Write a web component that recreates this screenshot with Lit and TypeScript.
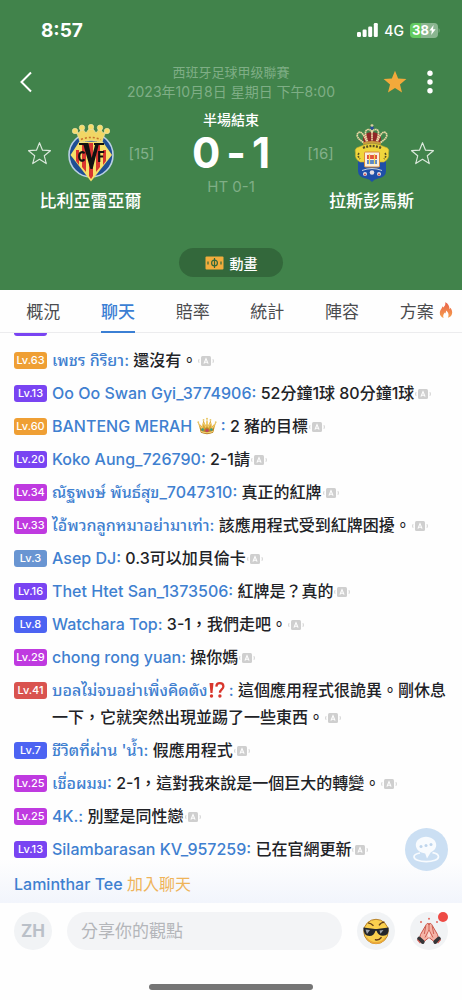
import { LitElement, html, css, svg, nothing } from "lit";
import { customElement, property, state } from "lit/decorators.js";
import { classMap } from "lit/directives/class-map.js";

interface Message {
  level: number;
  tone: string;
  name: string;
  emoji?: "crown" | "interrobang";
  text: string;
}

const MESSAGES: Message[] = [
  { level: 63, tone: "orange", name: "เพชร กิริยา", text: "還沒有。" },
  { level: 13, tone: "purple", name: "Oo Oo Swan Gyi_3774906", text: "52分鐘1球 80分鐘1球" },
  { level: 60, tone: "orange", name: "BANTENG MERAH", emoji: "crown", text: "2 豬的目標" },
  { level: 20, tone: "purple", name: "Koko Aung_726790", text: "2-1請" },
  { level: 34, tone: "magenta", name: "ณัฐพงษ์ พันธ์สุข_7047310", text: "真正的紅牌" },
  { level: 33, tone: "magenta", name: "ไอ้พวกลูกหมาอย่ามาเท่า", text: "該應用程式受到紅牌困擾。" },
  { level: 3, tone: "sky", name: "Asep DJ", text: "0.3可以加貝倫卡" },
  { level: 16, tone: "purple", name: "Thet Htet San_1373506", text: "紅牌是？真的" },
  { level: 8, tone: "blue", name: "Watchara Top", text: "3-1，我們走吧。" },
  { level: 29, tone: "magenta", name: "chong rong yuan", text: "操你媽" },
  { level: 41, tone: "red", name: "บอลไม่จบอย่าเพิ่งคิดตัง", emoji: "interrobang", text: "這個應用程式很詭異。剛休息一下，它就突然出現並踢了一些東西。" },
  { level: 7, tone: "blue", name: "ชีวิตที่ผ่าน 'น้ำ", text: "假應用程式" },
  { level: 25, tone: "magenta", name: "เชื่อผมม", text: "2-1，這對我來說是一個巨大的轉變。" },
  { level: 25, tone: "magenta", name: "4K.", text: "別墅是同性戀" },
  { level: 13, tone: "purple", name: "Silambarasan KV_957259", text: "已在官網更新" },
];

const starPath = "M12 1.6l2.9 7.2 7.6.5-5.9 4.9 1.9 7.5-6.5-4.1-6.5 4.1 1.9-7.5-5.9-4.9 7.6-.5z";

const translateIcon = svg`
  <rect x="4" y="1" width="10" height="10" rx="1.5" fill="#cfcfcf"/>
  <path d="M6.9 8.6 9 3.6l2.1 5M7.6 7.2h2.8" fill="none" stroke="#fff" stroke-width="1.1"/>
  <path d="M2 4.2Q1.2 6 2 7.8M16 4.2q.8 1.8 0 3.6" fill="none" stroke="#d2d2d2" stroke-width="1"/>`;

const crownIcon = svg`
  <path d="M1 5.5 4.4 17h13.2L21 5.5l-4.4 4.2L14.8 3 12.6 9 11 1.8 9.4 9 7.2 3 5.4 9.7z" fill="#d9a437"/>
  <path d="M4.4 17 3 11.5l4 2.6 4-3.4 4 3.4 4-2.6L17.6 17Q11 20 4.4 17z" fill="#b9822a"/>
  <path d="M2 7l3.2 5 2-6 2.4 5L11 4l1.4 7 2.4-5 2 6L20 7" fill="none" stroke="#f4d477" stroke-width="1"/>
  <path d="M4.2 15.4Q11 18.6 17.8 15.4" fill="none" stroke="#f0cf70" stroke-width="1.2"/>
  <circle cx="1.4" cy="5.4" r="1" fill="#e8c765"/><circle cx="20.6" cy="5.4" r="1" fill="#e8c765"/>
  <circle cx="7.2" cy="2.8" r="1" fill="#e8c765"/><circle cx="14.8" cy="2.8" r="1" fill="#e8c765"/>
  <circle cx="11" cy="1.6" r="1.1" fill="#e8c765"/>
  <circle cx="11" cy="14.4" r="1.7" fill="#c23f62"/>
  <circle cx="6.2" cy="13.4" r="1.3" fill="#2d9f8c"/><circle cx="15.8" cy="13.4" r="1.3" fill="#2d9f8c"/>`;

const interrobangIcon = svg`
  <path d="M1.6 1.6h4.2L4.8 12.2H2.6z" fill="#d8362c"/><circle cx="3.7" cy="15.4" r="1.8" fill="#d8362c"/>
  <path d="M8.8 5.4C9 2.8 10.6 1.8 12.5 1.8c2.2 0 3.8 1.3 3.8 3.5 0 3-3.6 3.2-3.6 6.5" fill="none" stroke="#d8362c" stroke-width="2.4"/>
  <circle cx="12.6" cy="15.4" r="1.8" fill="#d8362c"/>`;

@customElement("chat-row")
class ChatRow extends LitElement {
  @property({ attribute: false }) message!: Message;

  static styles = css`
    :host { display: flex; gap: 5px; align-items: flex-start; }
    .level {
      flex: none; width: 33px; height: 17px; margin-top: 5px; border-radius: 3px;
      font-size: 11px; line-height: 17px; font-weight: 500; color: #fff; text-align: center;
    }
    .orange { background: #ef9f34; }
    .purple { background: #7944f2; }
    .magenta { background: #bf3ae0; }
    .sky { background: #6995d2; }
    .blue { background: #4c63f2; }
    .red { background: #d9534f; }
    .line { margin: 0; min-width: 0; }
    .name { color: #3f80d0; }
    .crown, .bang { height: 18px; vertical-align: -3px; }
    .crown { width: 20px; }
    .bang { width: 17px; }
    .translate { width: 18px; height: 12px; vertical-align: -1px; }
  `;

  private emoji(kind: Message["emoji"]) {
    if (kind === "crown") return html` <svg class="crown" viewBox="0 0 22 19" role="img" aria-label="👑">${crownIcon}</svg> `;
    if (kind === "interrobang") return html`<svg class="bang" viewBox="0 0 18 18" role="img" aria-label="⁉️">${interrobangIcon}</svg> `;
    return nothing;
  }

  render() {
    const m = this.message;
    return html`
      <span class="level ${m.tone}">Lv.${m.level}</span>
      <p class="line"><span class="name">${m.name}${this.emoji(m.emoji)}:</span> ${m.text}<svg class="translate" viewBox="0 0 18 12" aria-hidden="true">${translateIcon}</svg></p>
    `;
  }
}

@customElement("team-card")
class TeamCard extends LitElement {
  @property() name = "";
  @property() rank = "";
  @property({ type: Boolean }) away = false;

  static styles = css`
    :host { display: block; }
    .team {
      display: grid; grid-template-columns: repeat(3, 51px); grid-template-rows: 58px 24px;
      row-gap: 7px; align-items: center; justify-items: center; padding-top: 14px;
    }
    .rank { font-size: 15px; color: #83b08a; }
    .favourite { display: flex; padding: 0; border: 0; background: none; }
    .star { width: 25px; height: 25px; }
    .away .favourite { order: 3; }
    .away .crest { order: 2; }
    .away .rank { order: 1; }
    .crest { height: 58px; }
    .name { order: 4; grid-column: 1 / -1; font-size: 17px; line-height: 24px; font-weight: 500; color: #fff; }
  `;

  private villarreal() {
    return svg`
      <circle cx="23" cy="31" r="22" fill="#1f4f94" stroke="#b9cfe4" stroke-width="1.6"/>
      <path d="M11 18h24l9 13-21 26.5L2.5 31z" fill="#f7e06a"/>
      <path d="M14 19h4v29l-4-5zM21 19h4v33l-2 3-2-3zM28 19h4v24l-4 5zM8 26h3v15l-3-4zM35 26h3v11l-3 4z" fill="#d8362f"/>
      <path d="M12 18.6Q10 9 6 6.5L11 9l3-5 4 5 5-7 5 7 4-5 3 5 5-2.5Q36 9 34 18.6 23 15 12 18.6z" fill="#f1d765" stroke="#e9e0a0" stroke-width=".8"/>
      <path d="M13 15.5q10-4 20 0" fill="none" stroke="#c8702d" stroke-width="1.5" stroke-dasharray="2 2"/>
      <g fill="#f6dc6a" stroke="#e8dfa6" stroke-width=".7"><circle cx="7" cy="7" r="2.7"/><circle cx="14" cy="3.7" r="2.7"/><circle cx="23" cy="3" r="2.7"/><circle cx="32" cy="3.7" r="2.7"/><circle cx="39" cy="7" r="2.7"/></g>
      <path d="M11 20h9.500M26 20h10" stroke="#111" stroke-width="1.8"/>
      <path d="M15 19.500h5.500L23.600 34l3.900-14.500h3.500L24.600 45h-2.200z" fill="#111"/>
      <path d="M16.200 29.500c-.8-2.400-5-1.800-5 3s4.200 5.200 5 2.700" fill="none" stroke="#111" stroke-width="2.200"/>
      <path d="M31.200 38V28h5M31.200 32.500h4" fill="none" stroke="#111" stroke-width="2.200"/>`;
  }

  private lasPalmas() {
    return svg`
      <path d="M9 35h28v12q0 6-8 7.5-4 .8-6 3.5-2-2.7-6-3.5Q9 53 9 47z" fill="#1f4fa8"/>
      <path d="M10 23q13-7 26 0 5 1 3.5 6 1 6-4.5 9H11q-5.500-3-4.500-9Q5 24 10 23z" fill="#f0d63c" stroke="#c9ad2e" stroke-width=".6"/>
      <path d="M14 24q9-4 18 0" stroke="#574f24" stroke-width="2.400" fill="none" stroke-dasharray="2 1.300"/>
      <path d="M10 29q-2 3 1 6M36 29q2 3-1 6" stroke="#574f24" stroke-width="1.600" fill="none" stroke-dasharray="2 1"/>
      <rect x="15.500" y="28" width="15" height="15" rx="1" fill="#f9eee0" stroke="#d98a3a"/>
      <path d="M18 31h10v4H18z" fill="#e2533d"/><path d="M18 36h10v4H18z" fill="#6089c8"/>
      <path d="M20.500 30v10M25.500 30v10" stroke="#f6d657" stroke-width="1.200"/>
      <g fill="#e7dfe3"><circle cx="16" cy="50" r="2"/><circle cx="23" cy="48.500" r="2.300"/><circle cx="30" cy="50" r="2"/></g>
      <circle cx="16" cy="50.500" r="1" fill="#d14a4a"/><circle cx="30" cy="50.500" r="1" fill="#d14a4a"/>
      <path d="M13 46.500q10-4 20 0" fill="none" stroke="#c8d0dc" stroke-width="1"/>
      <path d="M15 19q-2-5 0-8 4-3 8-3t8 3q2 3 0 8-8-2.500-16 0z" fill="#8f2727"/>
      <path d="M14.500 18.500Q6 13 9 9q4-3.500 8.500 8.500M18.500 17.500Q14 5.500 19.500 5.500q2.500 0 3.500 3 1-3 3.500-3 5.500 0 1 12M31.500 18.500Q40 13 37 9q-4-3.500-8.500 8.500M23 6v11" fill="none" stroke="#ead7a4" stroke-width="1.700" stroke-dasharray="1.700 .4"/>
      <path d="M14 18.500q9-3 18 0v2.300q-9-2.500-18 0z" fill="#c99b3c"/>
      <circle cx="23" cy="4" r="1.800" fill="#2a4d9c"/><path d="M23 0v3M21.500 1.300h3" stroke="#ead7a4" stroke-width="1"/>`;
  }

  render() {
    return html`
      <div class=${classMap({ team: true, away: this.away })}>
        <button class="favourite" aria-label="收藏 ${this.name}">
          <svg class="star" viewBox="0 0 24 24"><path d=${starPath} fill="none" stroke="#dbe8dc" stroke-width="1.1" stroke-linejoin="round"/></svg>
        </button>
        <svg class="crest" viewBox="0 0 46 58" aria-hidden="true">${this.away ? this.lasPalmas() : this.villarreal()}</svg>
        <span class="rank">[${this.rank}]</span>
        <span class="name">${this.name}</span>
      </div>
    `;
  }
}

@customElement("app-root")
class AppRoot extends LitElement {
  @state() private tab = "聊天";

  static styles = css`
    :host {
      display: flex; flex-direction: column; height: 100vh; background: #fefefe; color: #212226;
      font-family: Inter, "Noto Sans Thai Looped", "Noto Sans Thai", "Noto Sans CJK TC", sans-serif;
    }
    button { font: inherit; color: inherit; cursor: pointer; }
    .match { background: #41834b; color: #fff; padding-bottom: 13px; }
    .status { display: flex; justify-content: space-between; align-items: center; height: 60px; padding: 0 22px 0 41px; }
    .clock { font-size: 19px; font-weight: 700; }
    .signals { display: flex; align-items: center; gap: 6px; font-size: 14px; font-weight: 500; }
    .bars { width: 21px; height: 14px; }
    .battery { display: flex; align-items: center; }
    .charge {
      display: flex; align-items: center; justify-content: center; width: 28px; height: 15px; border-radius: 4px;
      background: linear-gradient(90deg, #63cb60 40%, #8ab590 40%); font-size: 13px; font-weight: 700;
    }
    .bolt { width: 7px; height: 10px; }
    .nav { display: grid; grid-template-columns: 80px 1fr 80px; align-items: center; height: 44px; }
    .icon { display: flex; padding: 0; border: 0; background: none; }
    .back { margin-left: 18px; }
    .back svg { width: 16px; height: 24px; }
    .actions { display: flex; align-items: center; justify-content: flex-end; gap: 18px; padding-right: 28px; }
    .gold { width: 26px; height: 26px; }
    .dots { width: 8px; height: 24px; }
    .event { text-align: center; font-size: 13px; line-height: 19px; color: #7fae86; white-space: nowrap; }
    .date { font-size: 14px; }
    .board { display: flex; justify-content: space-between; padding: 6px 14px 0; }
    .result { display: flex; flex-direction: column; align-items: center; white-space: nowrap; }
    .phase { font-size: 14px; line-height: 20px; font-weight: 500; }
    .score { display: flex; gap: 6px; font-size: 42px; line-height: 46px; font-weight: 700; margin: 0; }
    .half { font-size: 15px; line-height: 22px; color: #7fae86; }
    .animation {
      display: flex; align-items: center; justify-content: center; gap: 6px; width: 104px; height: 29px;
      margin: 35px auto 0; padding: 0; border: 0; border-radius: 15px; background: #33683b;
      font-size: 14px; font-weight: 500; color: #fff;
    }
    .pitch { width: 19px; height: 14px; }
    .tabs { display: grid; grid-template-columns: repeat(6, 1fr); padding: 0 8px 0 6px; border-bottom: 1px solid #ececee; background: #fefefe; }
    .tab { position: relative; height: 42px; padding: 0 0 2px; border: 0; background: none; font-size: 17px; font-weight: 400; color: #4b4c4f; white-space: nowrap; }
    .tab.active { color: #3b7fd4; font-weight: 500; }
    .tab.active::after { content: ""; position: absolute; left: 50%; bottom: -1px; width: 34px; height: 2px; margin-left: -17px; background: #3b7fd4; }
    .fire { position: absolute; left: 100%; top: 11px; width: 14px; height: 18px; margin-left: -15px; }
    .chat { position: relative; flex: 1; min-height: 0; overflow: hidden; display: flex; flex-direction: column; justify-content: flex-end;
      background: linear-gradient(0deg, #f2f5fc, #fefefe 44px); }
    .log { display: flex; flex-direction: column; gap: 6px; padding: 0 14px 5px; font-size: 16px; line-height: 27px; font-weight: 500; }
    .clipped { flex: none; width: 33px; height: 17px; margin: 5px 0; border-radius: 3px; background: #7944f2; }
    .joined { margin: 2px 0 0; color: #3f80d0; }
    .notice { color: #efb45a; font-weight: 400; }
    .bubble { position: absolute; right: 14px; bottom: 32px; display: flex; padding: 0; border: 0; border-radius: 50%; background: none; }
    .bubble svg { width: 43px; height: 43px; }
    .composer { display: flex; align-items: center; gap: 15px; padding: 9px 14px 34px; background: #fefefe; }
    .round { position: relative; flex: none; display: flex; align-items: center; justify-content: center; width: 38px; height: 38px; padding: 0; border: 0; border-radius: 50%; background: #f1f3f5; }
    .language { font-size: 17px; font-weight: 700; color: #bac0c8; }
    .field { flex: 1; min-width: 0; height: 38px; box-sizing: border-box; padding: 0 14px; border: 0; border-radius: 19px; background: #f3f4f6; font: inherit; font-size: 17px; color: #212226; outline: none; }
    .field::placeholder { color: #b4b6ba; opacity: 1; }
    .face { width: 28px; height: 28px; }
    .unread { position: absolute; top: 0; right: 0; width: 10px; height: 10px; border-radius: 50%; background: #ee4a45; }
    .home { display: flex; justify-content: center; padding-bottom: 10px; background: #fefefe; }
    .home span { width: 164px; height: 6px; border-radius: 3px; background: #757575; }
  `;

  private renderTab(label: string) {
    const active = this.tab === label;
    return html`<button role="tab" aria-selected=${active ? "true" : "false"} class=${classMap({ tab: true, active })} @click=${() => (this.tab = label)}>${label}${label === "方案"
      ? html`<svg class="fire" viewBox="0 0 14 18" aria-hidden="true">
          <defs><linearGradient id="flame" x1="0" y1="0" x2="0" y2="1"><stop offset="0" stop-color="#e8604a"/><stop offset="1" stop-color="#f5a04e"/></linearGradient></defs>
          <path d="M6.200 1.200c.6 2.400-.4 3.700-1.800 5.200l-1-1.200C3.400 7.500.8 8.800.8 12c0 2.400 1.500 4.200 3.800 4.900-.9-2.300-.2-4.100 1.200-5.500l.4 1.100c.7-.8 1-1.800.9-2.900 2.300 1.600 3.200 4.800 1.800 7.200 2.600-.7 4.300-2.600 4.300-5.300 0-2.200-1-3.600-1.700-4.700l-1 1.400C10.600 4.900 9 2.200 6.200 1.200z" fill="url(#flame)"/>
        </svg>`
      : nothing}</button>`;
  }

  render() {
    return html`
      <header class="match">
        <div class="status">
          <span class="clock">8:57</span>
          <div class="signals">
            <svg class="bars" viewBox="0 0 21 14" aria-hidden="true" fill="#fff">
              <rect x="0" y="9" width="4" height="5" rx="1.200"/><rect x="5.600" y="6.500" width="4" height="7.500" rx="1.200"/>
              <rect x="11.200" y="3.500" width="4" height="10.500" rx="1.200"/><rect x="16.800" y="0" width="4" height="14" rx="1.200"/>
            </svg>
            <span>4G</span>
            <span class="battery">
              <span class="charge">38<svg class="bolt" viewBox="0 0 7 10"><path d="M4.600 0 .4 5.600h2.400L2.200 10l4.400-5.800H4z" fill="#fff"/></svg></span>
              <svg width="2" height="5" viewBox="0 0 2 5" aria-hidden="true"><path d="M.5 0q1.300.6 1.300 2.500T.5 5z" fill="#6fa377"/></svg>
            </span>
          </div>
        </div>
        <div class="nav">
          <button class="icon back" aria-label="返回"><svg viewBox="0 0 16 24"><path d="M13 2.500 3.500 12 13 21.500" fill="none" stroke="#fff" stroke-width="2"/></svg></button>
          <div class="event"><div>西班牙足球甲级聯賽</div><div class="date">2023年10月8日 星期日 下午8:00</div></div>
          <div class="actions">
            <button class="icon" aria-label="收藏"><svg class="gold" viewBox="0 0 24 24"><path d=${starPath} fill="#f2a93b"/></svg></button>
            <button class="icon" aria-label="更多"><svg class="dots" viewBox="0 0 8 24" fill="#fff"><circle cx="4" cy="3.300" r="2.700"/><circle cx="4" cy="12" r="2.700"/><circle cx="4" cy="20.700" r="2.700"/></svg></button>
          </div>
        </div>
        <div class="board">
          <team-card name="比利亞雷亞爾" rank="15"></team-card>
          <div class="result">
            <span class="phase">半場結束</span>
            <h1 class="score"><span>0</span><span>-</span><span>1</span></h1>
            <span class="half">HT 0-1</span>
          </div>
          <team-card away name="拉斯彭馬斯" rank="16"></team-card>
        </div>
        <button class="animation">
          <svg class="pitch" viewBox="0 0 19 14" aria-hidden="true">
            <rect x=".5" y=".5" width="18" height="13" rx="1" fill="#f2ad3d"/>
            <circle cx="9.500" cy="7" r="2.900" fill="none" stroke="#33683b" stroke-width="1.200"/>
            <path d="M9.500 2v10M3 5.500v3M16 5.500v3" stroke="#33683b" stroke-width="1.200"/>
          </svg>動畫
        </button>
      </header>

      <nav class="tabs" role="tablist">${["概況", "聊天", "賠率", "統計", "陣容", "方案"].map((t) => this.renderTab(t))}</nav>

      <main class="chat">
        <div class="log">
          <span class="clipped"></span>
          ${MESSAGES.map((m) => html`<chat-row .message=${m}></chat-row>`)}
          <p class="joined">Laminthar Tee <span class="notice">加入聊天</span></p>
        </div>
        <button class="bubble" aria-label="聊天室">
          <svg viewBox="0 0 43 43">
            <circle cx="21.500" cy="21.500" r="21.500" fill="#cbdff3"/>
            <path d="M15 25c-4 .8-6 2-6 3.700 0 2.900 5.400 5 12.200 5s12.300-2.100 12.300-5c0-1.900-2.400-3.300-6-4" fill="none" stroke="#f8fbfe" stroke-width="1.700"/>
            <path d="M21 8.800c5.700 0 10.200 3.600 10.200 8.300 0 3.300-2.300 6-5.600 7.300L22 30.400l-1.800-5c-5.300-.4-9.400-3.900-9.400-8.300 0-4.700 4.500-8.300 10.200-8.300z" fill="#f8fbfe"/>
            <g fill="#bed5ec"><circle cx="16" cy="18.400" r="1.500"/><circle cx="21" cy="17.500" r="1.500"/><circle cx="26" cy="16.600" r="1.500"/></g>
          </svg>
        </button>
      </main>

      <form class="composer" @submit=${(e: Event) => e.preventDefault()}>
        <button type="button" class="round language" aria-label="語言 ZH">ZH</button>
        <input class="field" type="text" aria-label="分享你的觀點" placeholder="分享你的觀點">
        <button type="button" class="round" aria-label="表情">
          <svg class="face" viewBox="0 0 28 28">
            <circle cx="14" cy="14.500" r="12.200" fill="#f9cf4e" stroke="#b7822d" stroke-width="1"/>
            <path d="M4 19q4 6.500 11 6 6-.5 9-6-2 8-10 8T4 19z" fill="#eba83a"/>
            <path d="M6 5.800q3 .2 5.500 3M22.500 5.200q-3.500 0-5.500 3.200" fill="none" stroke="#65401c" stroke-width="1.300"/>
            <path d="M1.300 10.500 13 12h2l11.700-1.500q.7 8.300-5.700 8.300-4.800 0-6.500-5h-1Q12 19 7.500 19 1.300 19 1.300 10.500z" fill="#22252b"/>
            <path d="M3.500 12.500 8 13l-3 4zM17.500 13.500l4-.4-3 3.600z" fill="#9fa5ad"/>
            <path d="M13.500 22.800q3.800.6 5.600-2.200" fill="none" stroke="#673a16" stroke-width="1.500" stroke-linecap="round"/>
          </svg>
        </button>
        <button type="button" class="round" aria-label="祈禱">
          <svg class="face" viewBox="0 0 28 28">
            <path d="M13.600 6.500q-1.500-.6-2.300 1L5.500 17.500l-1 4 4.500 3 5-4 5 4 4.500-3-1-4-5.800-10q-.8-1.600-2.300-1L14 8z" fill="#f5b3a6" stroke="#c9584d" stroke-width="1"/>
            <path d="M14 7v6M14 13l-4 7.500M14 13l4 7.500M10.800 9l-1.500 8M17.200 9l1.500 8" fill="none" stroke="#c9584d" stroke-width=".9"/>
            <path d="M14 14l-1.800 4.500L14 21l1.800-2.500z" fill="#f9ddd6"/>
            <path d="M4.200 21.800 7.600 24.800M23.800 21.800 20.400 24.800" stroke="#353538" stroke-width="4.200" stroke-linecap="round"/>
            <path d="M2.400 22.600l3 3.600M25.600 22.600l-3 3.600" stroke="#d3574e" stroke-width="1.100"/>
            <g fill="#e3695e"><circle cx="6" cy="5" r="1"/><circle cx="14" cy="1.800" r="1"/><circle cx="22" cy="5" r="1"/></g>
          </svg>
          <span class="unread"></span>
        </button>
      </form>
      <div class="home"><span></span></div>
    `;
  }
}
